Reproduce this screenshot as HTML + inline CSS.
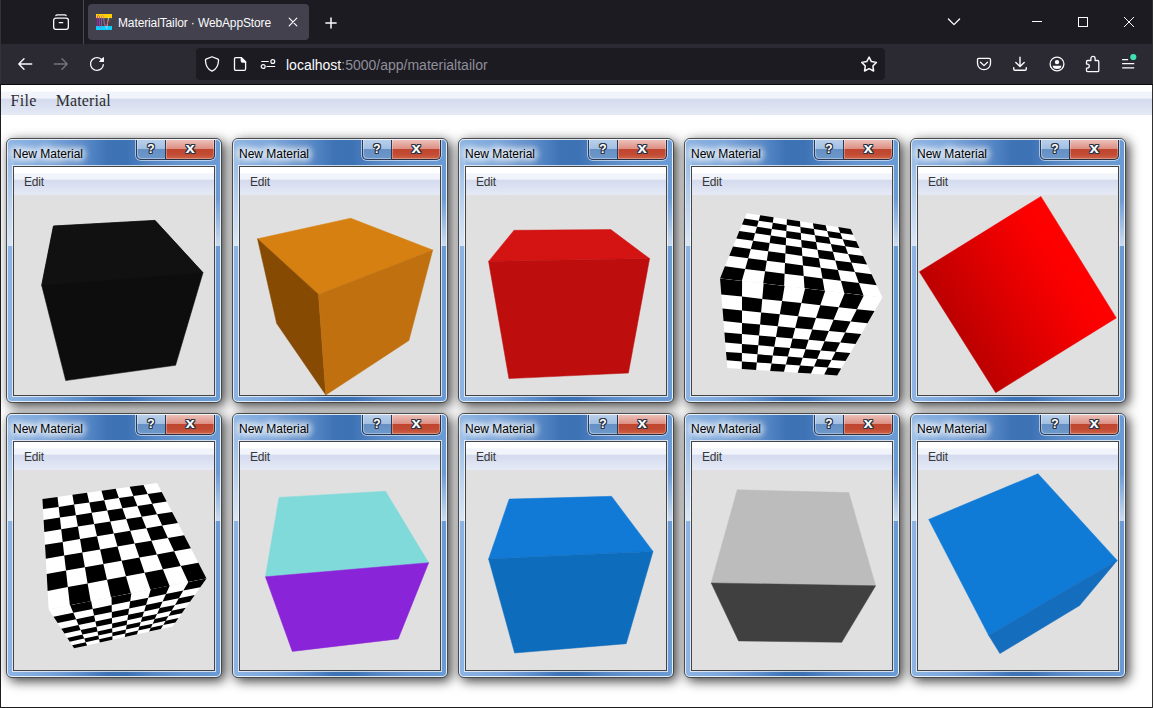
<!DOCTYPE html>
<html><head><meta charset="utf-8"><title>MaterialTailor · WebAppStore</title>
<style>
*{box-sizing:border-box}
html,body{margin:0;padding:0}
body{width:1153px;height:708px;overflow:hidden;background:#1e1e1e;position:relative;font-family:"Liberation Sans",sans-serif}
#tabbar{position:absolute;left:1px;top:0;width:1151px;height:44px;background:#1c1b22}
#toolbar{position:absolute;left:1px;top:44px;width:1151px;height:40px;background:#2b2a33}
#lb{position:absolute;left:0;top:0;width:1px;height:84px;background:#333}
#rb{position:absolute;left:1152px;top:0;width:1px;height:708px;background:#303030}
#sepline{position:absolute;left:0;top:84px;width:1153px;height:1px;background:#0c0c0d}
#tabsep{position:absolute;left:83px;top:0;width:1px;height:44px;background:#4a4952}
#tab{position:absolute;left:88px;top:4px;width:221px;height:36px;background:#42414d;border-radius:4px}
#tabtitle{position:absolute;left:118px;top:16px;font-size:12px;line-height:14px;color:#fbfbfe;white-space:nowrap;letter-spacing:-0.125px}
#urlbar{position:absolute;left:196px;top:48px;width:689px;height:32px;background:#1c1b22;border-radius:4px}
#url{position:absolute;left:286px;top:57px;font-size:14px;line-height:17px;color:#fbfbfe;white-space:nowrap}
#url span{color:#8f8e99}
.ic{position:absolute;width:16px;height:16px;overflow:visible}
.ic *{vector-effect:none}
#page{position:absolute;left:1px;top:85px;width:1151px;height:622px;background:#fff;overflow:hidden}
#menubar{position:absolute;left:0;top:0;width:1151px;height:30px;background:linear-gradient(#fff 20%,#f1f4fa 25%,#f1f4fa 43%,#d4dbee 48%,#e6eaf6);font-family:"Liberation Serif",serif;font-size:16px;line-height:30px;color:#2c2c2c}
#menubar span{position:absolute;top:1px}
.win{position:absolute;width:216px;height:265px;border:1px solid #4a4a4a;border-radius:6px;box-shadow:3px 3px 12px rgba(0,0,0,.78);background:#6d9ad0}
.glass{position:absolute;left:0;top:0;width:214px;height:263px;border-radius:5px;border:1px solid rgba(255,255,255,.8);
background:linear-gradient(90deg,#8db4e3 0,#7ca7dc 18%,#5c8dca 35%,#3e73b6 47%,#3d72b5 56%,#5788c5 68%,#6696d0 82%,#6b9bd5 100%)}
.title{position:absolute;left:6px;top:7px;font-size:12px;line-height:16px;color:#000;white-space:nowrap;text-shadow:0 0 6px #fff,0 0 8px #fff,0 0 8px #fff,0 0 10px #fff,0 0 12px #fff}
.sl,.sr{position:absolute;top:1px;width:6px;height:106px}
.sl{left:1px;background:linear-gradient(rgba(255,255,255,0) 0,rgba(255,255,255,.68) 100%)}
.sr{right:1px;background:linear-gradient(rgba(255,255,255,0) 0,rgba(255,255,255,0) 55%,rgba(255,255,255,.66) 100%)}
.btns{position:absolute;left:129px;top:1px;width:79px;height:20px;border-radius:0 0 5px 5px;box-shadow:0 0 0 1px rgba(255,255,255,.55)}
.hb,.cb{position:absolute;top:0;height:20px;color:#fff;font-weight:bold;text-align:center;
text-shadow:1px 0 0 #2b3445,-1px 0 0 #2b3445,0 1px 0 #2b3445,0 -1px 0 #2b3445,1px 1px 0 #2b3445,-1px -1px 0 #2b3445,1px -1px 0 #2b3445,-1px 1px 0 #2b3445}
.hb{left:0;width:30px;border:1px solid #2a3a55;border-top:0;border-radius:0 0 0 5px;font-size:12px;line-height:18px;
background:linear-gradient(#b8cfea 0,#a2bfe2 47%,#6690c3 48%,#6d98ca 100%);box-shadow:inset 1px -1px 0 rgba(255,255,255,.35)}
.cb{left:30px;width:49px;border:1px solid #2a2f3f;border-left:0;border-top:0;border-radius:0 0 5px 0;font-size:15px;line-height:15px;
background:linear-gradient(#ecc0b8 0,#dd8e82 47%,#c0452f 48%,#c24a33 75%,#cc6448 100%);box-shadow:inset 1px -1px 0 rgba(255,255,255,.3),inset -1px 0 0 rgba(255,255,255,.3)}
.cb b{display:inline-block;transform:scaleX(1.12)}
.content{position:absolute;left:6px;top:27px;width:202px;height:230px;border:1px solid #444;background:#e0e0e0;box-shadow:0 0 0 1px rgba(255,255,255,.7)}
.menu{position:absolute;left:0;top:0;width:200px;height:28px;background:linear-gradient(#fff 20%,#f1f4fa 25%,#f1f4fa 43%,#d4dbee 48%,#e6eaf6);font-size:12px;line-height:28px;color:#383838}
.menu span{position:absolute;left:10px;top:1px;letter-spacing:-0.2px}
.cv{position:absolute;left:0;top:28px;display:block}
</style></head><body>
<div id="lb"></div><div id="rb"></div><div id="sepline"></div><div id="tabbar"></div><div id="toolbar"></div><div id="tabsep"></div><div id="tab"></div>
<div id="tabtitle">MaterialTailor · WebAppStore</div>
<div id="urlbar"></div>
<div id="url">localhost<span>:5000/app/materialtailor</span></div>
<svg class="ic" style="left:53px;top:14px" viewBox="0 0 16 16" fill="none" stroke="#fbfbfe" stroke-width="1.3" stroke-linecap="round"><rect x="0.65" y="4.1" width="14.7" height="11.2" rx="2.2"/><path d="M2.9 1.6Q3.2 0.8 4.4 0.8H11.6Q12.8 0.8 13.1 1.6"/><path d="M6.3 8.7H9.7"/></svg>
<svg class="ic" style="left:17px;top:56px" viewBox="0 0 16 16" fill="none" stroke="#fbfbfe" stroke-width="1.4" stroke-linecap="round" stroke-linejoin="round"><path d="M1.800 8H14.700M7 2.800L1.800 8L7 13.200"/></svg>
<svg class="ic" style="left:53px;top:56px" viewBox="0 0 16 16" fill="none" stroke="#75747c" stroke-width="1.4" stroke-linecap="round" stroke-linejoin="round"><path d="M14.200 8H1.300M9 2.800L14.200 8L9 13.200"/></svg>
<svg class="ic" style="left:89px;top:56px" viewBox="0 0 16 16" fill="#fbfbfe"><path d="M10.707 6H14.7l.3-.3V1.707a.5.5 0 0 0-.854-.354l-1.459 1.459A6.95 6.95 0 0 0 8 1C4.141 1 1 4.141 1 8s3.141 7 7 7a6.97 6.97 0 0 0 6.968-6.322.626.626 0 0 0-.562-.682.635.635 0 0 0-.682.562A5.726 5.726 0 0 1 8 13.75c-3.171 0-5.75-2.579-5.75-5.75S4.829 2.25 8 2.250a5.71 5.71 0 0 1 3.805 1.445l-1.451 1.451a.5.5 0 0 0 .353.854z"/></svg>
<svg class="ic" style="left:204px;top:56px" viewBox="0 0 16 16" fill="none" stroke="#fbfbfe" stroke-width="1.3" stroke-linejoin="round"><path d="M8 0.750L14 3.200Q14.600 3.500 14.550 4.200C14.400 9.500 12.300 13.300 8 15.200C3.700 13.300 1.600 9.500 1.450 4.200Q1.400 3.500 2 3.200Z"/></svg>
<svg class="ic" style="left:232px;top:56px" viewBox="0 0 16 16" fill="none" stroke="#fbfbfe" stroke-width="1.3" stroke-linejoin="round"><path d="M3.8 1.7H9.3L13.6 6V13.1Q13.6 14.4 12.3 14.4H3.8Q2.5 14.4 2.5 13.1V3Q2.5 1.7 3.8 1.7Z"/><path d="M9.3 1.7V4.8Q9.3 6 10.5 6H13.6Z" fill="#fbfbfe"/></svg>
<svg class="ic" style="left:260px;top:56px" viewBox="0 0 16 16" fill="none" stroke="#fbfbfe" stroke-width="1.200" stroke-linecap="round"><path d="M1.700 5.500H8.300M6.900 10.500H14.700"/><circle cx="12.800" cy="5.500" r="1.950"/><circle cx="3.200" cy="10.500" r="1.950"/></svg>
<svg class="ic" style="left:861px;top:56px" viewBox="0 0 16 16" fill="none" stroke="#fbfbfe" stroke-width="1.5" stroke-linejoin="round"><path d="M8.10 1.05L10.42 5.55L15.42 6.37L11.86 9.97L12.63 14.98L8.10 12.70L3.57 14.98L4.34 9.97L0.78 6.37L5.78 5.55Z"/></svg>
<svg class="ic" style="left:976px;top:56px" viewBox="0 0 16 16" fill="none" stroke="#fbfbfe" stroke-width="1.3" stroke-linecap="round" stroke-linejoin="round"><path d="M2.800 2.400H13.200Q14.500 2.400 14.500 3.700V7.200C14.500 11 11.600 13.700 8 13.700C4.400 13.700 1.500 11 1.500 7.200V3.700Q1.500 2.400 2.800 2.400Z"/><path d="M4.500 6.200L8 9.600L11.500 6.200"/></svg>
<svg class="ic" style="left:1012px;top:56px" viewBox="0 0 16 16" fill="none" stroke="#fbfbfe" stroke-width="1.4" stroke-linecap="round" stroke-linejoin="round"><path d="M8 1.2V10.4M3.800 6.400L8 10.600L12.200 6.400"/><path d="M1.700 11.600V13Q1.700 14.300 3 14.300H13Q14.300 14.300 14.300 13V11.600"/></svg>
<svg class="ic" style="left:1048.600px;top:56.400px" viewBox="0 0 16 16" fill="none" stroke="#fbfbfe" stroke-width="1.3"><circle cx="8" cy="8" r="6.900"/><circle cx="8" cy="6.100" r="2.200" fill="#fbfbfe" stroke="none"/><path d="M3.700 9.800H12.300A4.300 3.300 0 0 1 3.700 9.800Z" fill="#fbfbfe" stroke="none"/></svg>
<svg class="ic" style="left:1084px;top:56px" viewBox="0 0 16 16" fill="none" stroke="#fbfbfe" stroke-width="1.3" stroke-linejoin="round"><path d="M6.900 4.500V2.500a2.100 2.100 0 0 1 4.200 0V4.500H13.600Q14.800 4.500 14.800 5.700V14.400Q14.800 15.600 13.600 15.600H3.700Q2.500 15.600 2.500 14.400V12.100H3.300a2 2 0 0 0 0-4H2.500V5.700Q2.500 4.500 3.700 4.500Z"/></svg>
<svg class="ic" style="left:1120px;top:56px" viewBox="0 0 16 16" fill="none" stroke="#fbfbfe" stroke-width="1.25" stroke-linecap="round"><path d="M2.600 3.700H7.600M2.600 7.700H13.800M2.600 11.800H13.800"/><circle cx="13.300" cy="1" r="3.100" fill="#3fe1b0" stroke="none"/></svg>
<svg class="ic" style="left:946px;top:14px" viewBox="0 0 16 16" fill="none" stroke="#fbfbfe" stroke-width="1.3" stroke-linecap="round" stroke-linejoin="round"><path d="M2.400 5L8 10.600L13.600 5"/></svg>
<svg class="ic" style="left:1029px;top:14px" viewBox="0 0 16 16" fill="none" stroke="#fbfbfe" stroke-width="1"><path d="M3 7.500H13"/></svg>
<svg class="ic" style="left:1075px;top:14px" viewBox="0 0 16 16" fill="none" stroke="#fbfbfe" stroke-width="1"><rect x="3.500" y="3.500" width="9" height="9"/></svg>
<svg class="ic" style="left:1121px;top:14px" viewBox="0 0 16 16" fill="none" stroke="#fbfbfe" stroke-width="1"><path d="M3 3L13 13M13 3L3 13"/></svg>
<svg class="ic" style="left:285px;top:14px" viewBox="0 0 16 16" fill="none" stroke="#fbfbfe" stroke-width="1.2" stroke-linecap="round"><path d="M4.200 4.200L11.800 11.800M11.800 4.200L4.200 11.800"/></svg>
<svg class="ic" style="left:323px;top:15px" viewBox="0 0 16 16" fill="none" stroke="#fbfbfe" stroke-width="1.5" stroke-linecap="round"><path d="M8 2.900V13.100M2.900 8H13.100"/></svg>
<svg class="ic" style="left:96px;top:14px" viewBox="0 0 16 16"><defs><linearGradient id="fg" x1="0" x2="1" y1="0" y2="0"><stop offset="0" stop-color="#c020c4"/><stop offset=".5" stop-color="#c070d8"/><stop offset="1" stop-color="#f4f4ff"/></linearGradient></defs><rect width="16" height="4.100" fill="#ffd000"/><rect y="12" width="16" height="4" fill="#0cd0fc"/><path d="M1.500 12.500V2.500Q2.500 0 3.500 2.500L3.600 13Q4.500 14.500 5.500 13L5.600 2.500Q6.500 0 7.500 2.500L8.200 9.500L10.600 14.500L12.600 3.300" stroke="url(#fg)" stroke-width=".95" fill="none" opacity=".75"/><path d="M9.200 11.400L14.300 6.200" stroke="#d02525" stroke-width=".9"/></svg>

<div id="page">
<div id="menubar"><span style="left:9.600px;letter-spacing:.3px">File</span><span style="left:54.800px;letter-spacing:.1px">Material</span></div>
<div class="win" style="left:5px;top:53px">
<div class="glass"></div><div class="sl"></div><div class="sr"></div>
<div class="title">New Material</div>
<div class="btns"><span class="hb">?</span><span class="cb"><b>x</b></span></div>
<div class="content"><div class="menu"><span>Edit</span></div>
<svg class="cv" width="200" height="200" viewBox="0 0 200 200"><polygon points="39.5,31.0 141.0,25.4 189.0,77.7 161.6,170.3 51.7,185.6 27.7,90.4" fill="#0d0d0d" stroke="#0d0d0d" stroke-width=".5" stroke-linejoin="round"/><polygon points="39.5,31.0 141.0,25.4 189.0,77.7 27.7,90.4" fill="#111" stroke="#111" stroke-width=".5" stroke-linejoin="round"/></svg>
</div>
</div>
<div class="win" style="left:231px;top:53px">
<div class="glass"></div><div class="sl"></div><div class="sr"></div>
<div class="title">New Material</div>
<div class="btns"><span class="hb">?</span><span class="cb"><b>x</b></span></div>
<div class="content"><div class="menu"><span>Edit</span></div>
<svg class="cv" width="200" height="200" viewBox="0 0 200 200"><polygon points="110.7,23.2 192.7,55.1 78.5,99.4 17.5,43.8" fill="#d68012" stroke="#d68012" stroke-width=".5" stroke-linejoin="round"/><polygon points="17.5,43.8 78.5,99.4 85.8,200.0 36.7,128.5" fill="#874a02" stroke="#874a02" stroke-width=".5" stroke-linejoin="round"/><polygon points="78.5,99.4 192.7,55.1 168.9,145.5 85.8,200.0" fill="#c17010" stroke="#c17010" stroke-width=".5" stroke-linejoin="round"/></svg>
</div>
</div>
<div class="win" style="left:457px;top:53px">
<div class="glass"></div><div class="sl"></div><div class="sr"></div>
<div class="title">New Material</div>
<div class="btns"><span class="hb">?</span><span class="cb"><b>x</b></span></div>
<div class="content"><div class="menu"><span>Edit</span></div>
<svg class="cv" width="200" height="200" viewBox="0 0 200 200"><polygon points="48.0,35.3 144.8,34.6 183.6,63.6 22.6,66.4" fill="#d41313" stroke="#d41313" stroke-width=".5" stroke-linejoin="round"/><polygon points="22.6,66.4 183.6,63.6 162.4,178.0 42.9,183.6" fill="#bd0d0d" stroke="#bd0d0d" stroke-width=".5" stroke-linejoin="round"/></svg>
</div>
</div>
<div class="win" style="left:683px;top:53px">
<div class="glass"></div><div class="sl"></div><div class="sr"></div>
<div class="title">New Material</div>
<div class="btns"><span class="hb">?</span><span class="cb"><b>x</b></span></div>
<div class="content"><div class="menu"><span>Edit</span></div>
<svg class="cv" width="200" height="200" viewBox="0 0 200 200"><polygon points="54.6,18.2 158.6,34.0 190.4,102.6 28.0,83.4" fill="#fff"/><path d="M68.2 20.3L81.6 22.3L80.8 27.8L66.7 25.7ZM94.9 24.3L108.0 26.3L108.4 31.9L94.7 29.9ZM120.9 28.3L133.6 30.2L135.2 35.9L121.9 33.9ZM146.2 32.1L158.6 34.0L161.3 39.8L148.3 37.9ZM52.4 23.6L66.7 25.7L65.0 31.7L50.0 29.5ZM80.8 27.8L94.7 29.9L94.4 36.0L79.8 33.9ZM108.4 31.9L121.9 33.9L122.9 40.2L108.8 38.1ZM135.2 35.9L148.3 37.9L150.7 44.2L136.9 42.2ZM65.0 31.7L79.8 33.9L78.7 40.6L63.1 38.3ZM94.4 36.0L108.8 38.1L109.2 44.9L94.1 42.8ZM122.9 40.2L136.9 42.2L138.8 49.1L124.1 47.0ZM150.7 44.2L164.3 46.2L167.5 53.2L153.3 51.2ZM47.3 36.1L63.1 38.3L61.1 45.7L44.3 43.4ZM78.7 40.6L94.1 42.8L93.8 50.3L77.6 48.0ZM109.2 44.9L124.1 47.0L125.5 54.7L109.8 52.5ZM138.8 49.1L153.3 51.2L156.1 58.9L140.9 56.8ZM61.1 45.7L77.6 48.0L76.3 56.3L58.8 54.0ZM93.8 50.3L109.8 52.5L110.3 60.9L93.4 58.6ZM125.5 54.7L140.9 56.8L143.3 65.4L126.9 63.2ZM156.1 58.9L171.1 61.0L175.1 69.6L159.3 67.5ZM41.0 51.6L58.8 54.0L56.2 63.3L37.2 60.8ZM76.3 56.3L93.4 58.6L93.0 68.1L74.8 65.7ZM110.3 60.9L126.9 63.2L128.6 72.7L111.0 70.4ZM143.3 65.4L159.3 67.5L162.9 77.1L145.9 74.9ZM56.2 63.3L74.8 65.7L73.1 76.3L53.2 73.9ZM93.0 68.1L111.0 70.4L111.7 81.1L92.6 78.8ZM128.6 72.7L145.9 74.9L148.9 85.8L130.5 83.5ZM162.9 77.1L179.6 79.3L184.7 90.2L166.9 88.0ZM32.9 71.3L53.2 73.9L49.8 86.0L28.0 83.4ZM73.1 76.3L92.6 78.8L92.1 91.0L71.2 88.5ZM111.7 81.1L130.5 83.5L132.6 95.8L112.5 93.4ZM148.9 85.8L166.9 88.0L171.5 100.4L152.3 98.1Z" fill="#000"/><polygon points="28.0,83.4 190.4,102.6 145.2,180.4 35.3,173.0" fill="#fff"/><path d="M28.0 83.4L50.1 86.0L50.0 101.6L29.3 99.4ZM71.6 88.6L92.6 91.0L90.1 106.0L70.3 103.9ZM113.1 93.5L133.2 95.8L128.3 110.2L109.4 108.1ZM152.7 98.1L171.8 100.4L164.9 114.2L146.8 112.2ZM50.0 101.6L70.3 103.9L69.1 117.4L50.0 115.5ZM90.1 106.0L109.4 108.1L106.1 121.2L87.8 119.3ZM128.3 110.2L146.8 112.2L141.6 124.8L124.0 123.0ZM164.9 114.2L182.5 116.1L175.5 128.2L158.7 126.5ZM30.5 113.5L50.0 115.5L50.0 127.9L31.5 126.1ZM69.1 117.4L87.8 119.3L85.8 131.2L68.1 129.6ZM106.1 121.2L124.0 123.0L120.2 134.5L103.2 132.9ZM141.6 124.8L158.7 126.5L153.2 137.6L136.9 136.0ZM50.0 127.9L68.1 129.6L67.1 140.5L49.9 139.0ZM85.8 131.2L103.2 132.9L100.5 143.4L84.0 142.0ZM120.2 134.5L136.9 136.0L132.6 146.2L116.7 144.8ZM153.2 137.6L169.2 139.1L163.5 148.9L148.2 147.6ZM32.4 137.4L49.9 139.0L49.9 149.0L33.2 147.6ZM67.1 140.5L84.0 142.0L82.3 151.7L66.3 150.3ZM100.5 143.4L116.7 144.8L113.6 154.2L98.1 152.9ZM132.6 146.2L148.2 147.6L143.6 156.7L128.7 155.4ZM49.9 149.0L66.3 150.3L65.5 159.3L49.9 158.1ZM82.3 151.7L98.1 152.9L95.9 161.6L80.8 160.5ZM113.6 154.2L128.7 155.4L125.2 163.9L110.7 162.8ZM143.6 156.7L158.3 157.9L153.5 166.0L139.5 165.0ZM34.0 156.9L49.9 158.1L49.9 166.4L34.7 165.3ZM65.5 159.3L80.8 160.5L79.5 168.5L64.8 167.5ZM95.9 161.6L110.7 162.8L108.1 170.6L93.9 169.5ZM125.2 163.9L139.5 165.0L135.7 172.5L122.0 171.6ZM49.9 166.4L64.8 167.5L64.1 174.9L49.8 174.0ZM79.5 168.5L93.9 169.5L92.0 176.8L78.2 175.9ZM108.1 170.6L122.0 171.6L119.0 178.6L105.7 177.7ZM135.7 172.5L149.2 173.5L145.2 180.4L132.2 179.5Z" fill="#000"/></svg>
</div>
</div>
<div class="win" style="left:909px;top:53px">
<div class="glass"></div><div class="sl"></div><div class="sr"></div>
<div class="title">New Material</div>
<div class="btns"><span class="hb">?</span><span class="cb"><b>x</b></span></div>
<div class="content"><div class="menu"><span>Edit</span></div>
<svg class="cv" width="200" height="200" viewBox="0 0 200 200"><defs><linearGradient id="rg" gradientUnits="userSpaceOnUse" x1="39.500" y1="137" x2="160.600" y2="62"><stop offset="0" stop-color="#bc0000"/><stop offset=".5" stop-color="#e40000"/><stop offset=".82" stop-color="#fb0000"/><stop offset="1" stop-color="#ff0000"/></linearGradient></defs><polygon points="122.9,1.4 198.3,122.9 77.7,197.7 1.4,76.8" fill="url(#rg)" stroke="url(#rg)" stroke-width=".5" stroke-linejoin="round"/></svg>
</div>
</div>
<div class="win" style="left:5px;top:328px">
<div class="glass"></div><div class="sl"></div><div class="sr"></div>
<div class="title">New Material</div>
<div class="btns"><span class="hb">?</span><span class="cb"><b>x</b></span></div>
<div class="content"><div class="menu"><span>Edit</span></div>
<svg class="cv" width="200" height="200" viewBox="0 0 200 200"><polygon points="28.4,29.0 143.1,13.0 192.5,108.4 34.7,139.4" fill="#fff"/><path d="M28.4 29.0L43.5 26.9L44.7 36.9L29.0 39.1ZM58.4 24.8L73.0 22.8L75.3 32.4L60.1 34.6ZM87.5 20.8L101.7 18.8L104.9 28.1L90.2 30.3ZM115.7 16.8L129.5 14.9L133.7 24.0L119.4 26.0ZM44.7 36.9L60.1 34.6L61.9 45.2L45.9 47.6ZM75.3 32.4L90.2 30.3L93.2 40.5L77.7 42.8ZM104.9 28.1L119.4 26.0L123.4 36.0L108.4 38.2ZM133.7 24.0L147.7 21.9L152.7 31.6L138.2 33.7ZM29.6 50.1L45.9 47.6L47.2 59.2L30.3 61.9ZM61.9 45.2L77.7 42.8L80.2 54.1L63.9 56.6ZM93.2 40.5L108.4 38.2L112.2 49.1L96.3 51.6ZM123.4 36.0L138.2 33.7L143.0 44.3L127.7 46.7ZM47.2 59.2L63.9 56.6L66.0 69.0L48.7 71.9ZM80.2 54.1L96.3 51.6L99.8 63.5L83.0 66.3ZM112.2 49.1L127.7 46.7L132.4 58.2L116.2 60.8ZM143.0 44.3L158.1 41.9L163.9 53.1L148.2 55.6ZM31.0 74.7L48.7 71.9L50.2 85.6L31.8 88.7ZM66.0 69.0L83.0 66.3L86.1 79.5L68.3 82.5ZM99.8 63.5L116.2 60.8L120.6 73.6L103.5 76.5ZM132.4 58.2L148.2 55.6L153.9 67.9L137.4 70.8ZM50.2 85.6L68.3 82.5L70.9 97.2L52.0 100.6ZM86.1 79.5L103.5 76.5L107.6 90.7L89.4 93.9ZM120.6 73.6L137.4 70.8L142.9 84.4L125.4 87.5ZM153.9 67.9L170.1 65.2L176.9 78.3L160.1 81.3ZM32.7 104.0L52.0 100.6L53.8 117.1L33.6 120.9ZM70.9 97.2L89.4 93.9L93.0 109.8L73.6 113.4ZM107.6 90.7L125.4 87.5L130.6 102.7L112.0 106.2ZM142.9 84.4L160.1 81.3L166.8 96.0L148.9 99.3ZM53.8 117.1L73.6 113.4L76.7 131.2L55.9 135.2ZM93.0 109.8L112.0 106.2L116.9 123.2L97.0 127.2ZM130.6 102.7L148.9 99.3L155.5 115.7L136.4 119.4ZM166.8 96.0L184.4 92.7L192.5 108.4L174.2 112.0Z" fill="#000"/><polygon points="34.7,139.4 192.5,108.4 158.6,156.4 60.1,178.3" fill="#fff"/><path d="M56.1 135.2L77.1 131.1L78.7 138.9L59.3 142.8ZM97.5 127.1L117.4 123.2L116.2 131.3L97.7 135.1ZM136.8 119.3L155.8 115.6L152.0 124.1L134.3 127.7ZM174.4 112.0L192.5 108.4L186.3 117.2L169.3 120.6ZM39.5 146.8L59.3 142.8L62.1 149.3L43.7 153.1ZM78.7 138.9L97.7 135.1L97.8 142.0L80.1 145.6ZM116.2 131.3L134.3 127.7L132.0 135.0L115.1 138.5ZM152.0 124.1L169.3 120.6L164.9 128.2L148.6 131.6ZM62.1 149.3L80.1 145.6L81.4 151.5L64.5 155.1ZM97.8 142.0L115.1 138.5L114.2 144.7L97.9 148.1ZM132.0 135.0L148.6 131.6L145.7 138.1L130.1 141.4ZM164.9 128.2L180.8 124.9L176.0 131.7L161.0 134.9ZM47.3 158.7L64.5 155.1L66.6 160.1L50.5 163.5ZM81.4 151.5L97.9 148.1L98.1 153.4L82.5 156.7ZM114.2 144.7L130.1 141.4L128.3 147.0L113.3 150.2ZM145.7 138.1L161.0 134.9L157.5 140.8L143.1 143.9ZM66.6 160.1L82.5 156.7L83.5 161.4L68.5 164.6ZM98.1 153.4L113.3 150.2L112.6 155.1L98.2 158.2ZM128.3 147.0L143.1 143.9L140.7 149.0L126.8 152.0ZM157.5 140.8L171.7 137.8L167.9 143.2L154.5 146.1ZM53.3 167.9L68.5 164.6L70.2 168.6L55.8 171.7ZM83.5 161.4L98.2 158.2L98.3 162.5L84.3 165.5ZM112.6 155.1L126.8 152.0L125.4 156.5L112.0 159.5ZM140.7 149.0L154.5 146.1L151.7 150.8L138.7 153.7ZM70.2 168.6L84.3 165.5L85.1 169.2L71.7 172.2ZM98.3 162.5L112.0 159.5L111.4 163.4L98.4 166.3ZM125.4 156.5L138.7 153.7L136.8 157.8L124.2 160.6ZM151.7 150.8L164.5 148.0L161.4 152.4L149.2 155.1ZM58.1 175.2L71.7 172.2L73.1 175.4L60.1 178.3ZM85.1 169.2L98.4 166.3L98.4 169.8L85.8 172.6ZM111.4 163.4L124.2 160.6L123.0 164.3L110.8 167.0ZM136.8 157.8L149.2 155.1L146.9 159.0L135.1 161.6Z" fill="#000"/></svg>
</div>
</div>
<div class="win" style="left:231px;top:328px">
<div class="glass"></div><div class="sl"></div><div class="sr"></div>
<div class="title">New Material</div>
<div class="btns"><span class="hb">?</span><span class="cb"><b>x</b></span></div>
<div class="content"><div class="menu"><span>Edit</span></div>
<svg class="cv" width="200" height="200" viewBox="0 0 200 200"><polygon points="39.0,27.4 145.5,21.2 188.7,92.7 25.4,106.8" fill="#80dada" stroke="#80dada" stroke-width=".5" stroke-linejoin="round"/><polygon points="25.4,106.8 188.7,92.7 158.2,168.9 52.3,181.4" fill="#8a24d8" stroke="#8a24d8" stroke-width=".5" stroke-linejoin="round"/></svg>
</div>
</div>
<div class="win" style="left:457px;top:328px">
<div class="glass"></div><div class="sl"></div><div class="sr"></div>
<div class="title">New Material</div>
<div class="btns"><span class="hb">?</span><span class="cb"><b>x</b></span></div>
<div class="content"><div class="menu"><span>Edit</span></div>
<svg class="cv" width="200" height="200" viewBox="0 0 200 200"><polygon points="43.2,29.1 145.5,26.3 187.0,81.4 22.6,89.0" fill="#117ad6" stroke="#117ad6" stroke-width=".5" stroke-linejoin="round"/><polygon points="22.6,89.0 187.0,81.4 160.2,173.7 48.6,183.0" fill="#0e6cbc" stroke="#0e6cbc" stroke-width=".5" stroke-linejoin="round"/></svg>
</div>
</div>
<div class="win" style="left:683px;top:328px">
<div class="glass"></div><div class="sl"></div><div class="sr"></div>
<div class="title">New Material</div>
<div class="btns"><span class="hb">?</span><span class="cb"><b>x</b></span></div>
<div class="content"><div class="menu"><span>Edit</span></div>
<svg class="cv" width="200" height="200" viewBox="0 0 200 200"><polygon points="45.2,19.8 156.8,22.6 183.6,115.8 19.2,113.0" fill="#bcbcbc" stroke="#bcbcbc" stroke-width=".5" stroke-linejoin="round"/><polygon points="19.2,113.0 183.6,115.8 149.7,172.3 46.6,170.9" fill="#404040" stroke="#404040" stroke-width=".5" stroke-linejoin="round"/></svg>
</div>
</div>
<div class="win" style="left:909px;top:328px">
<div class="glass"></div><div class="sl"></div><div class="sr"></div>
<div class="title">New Material</div>
<div class="btns"><span class="hb">?</span><span class="cb"><b>x</b></span></div>
<div class="content"><div class="menu"><span>Edit</span></div>
<svg class="cv" width="200" height="200" viewBox="0 0 200 200"><polygon points="10.7,49.4 120.0,3.7 199.2,90.4 70.6,165.3" fill="#0f7bd6" stroke="#0f7bd6" stroke-width=".5" stroke-linejoin="round"/><polygon points="70.6,165.3 199.2,90.4 161.6,135.6 81.9,183.6" fill="#156dbe" stroke="#156dbe" stroke-width=".5" stroke-linejoin="round"/></svg>
</div>
</div>
</div>
</body></html>
